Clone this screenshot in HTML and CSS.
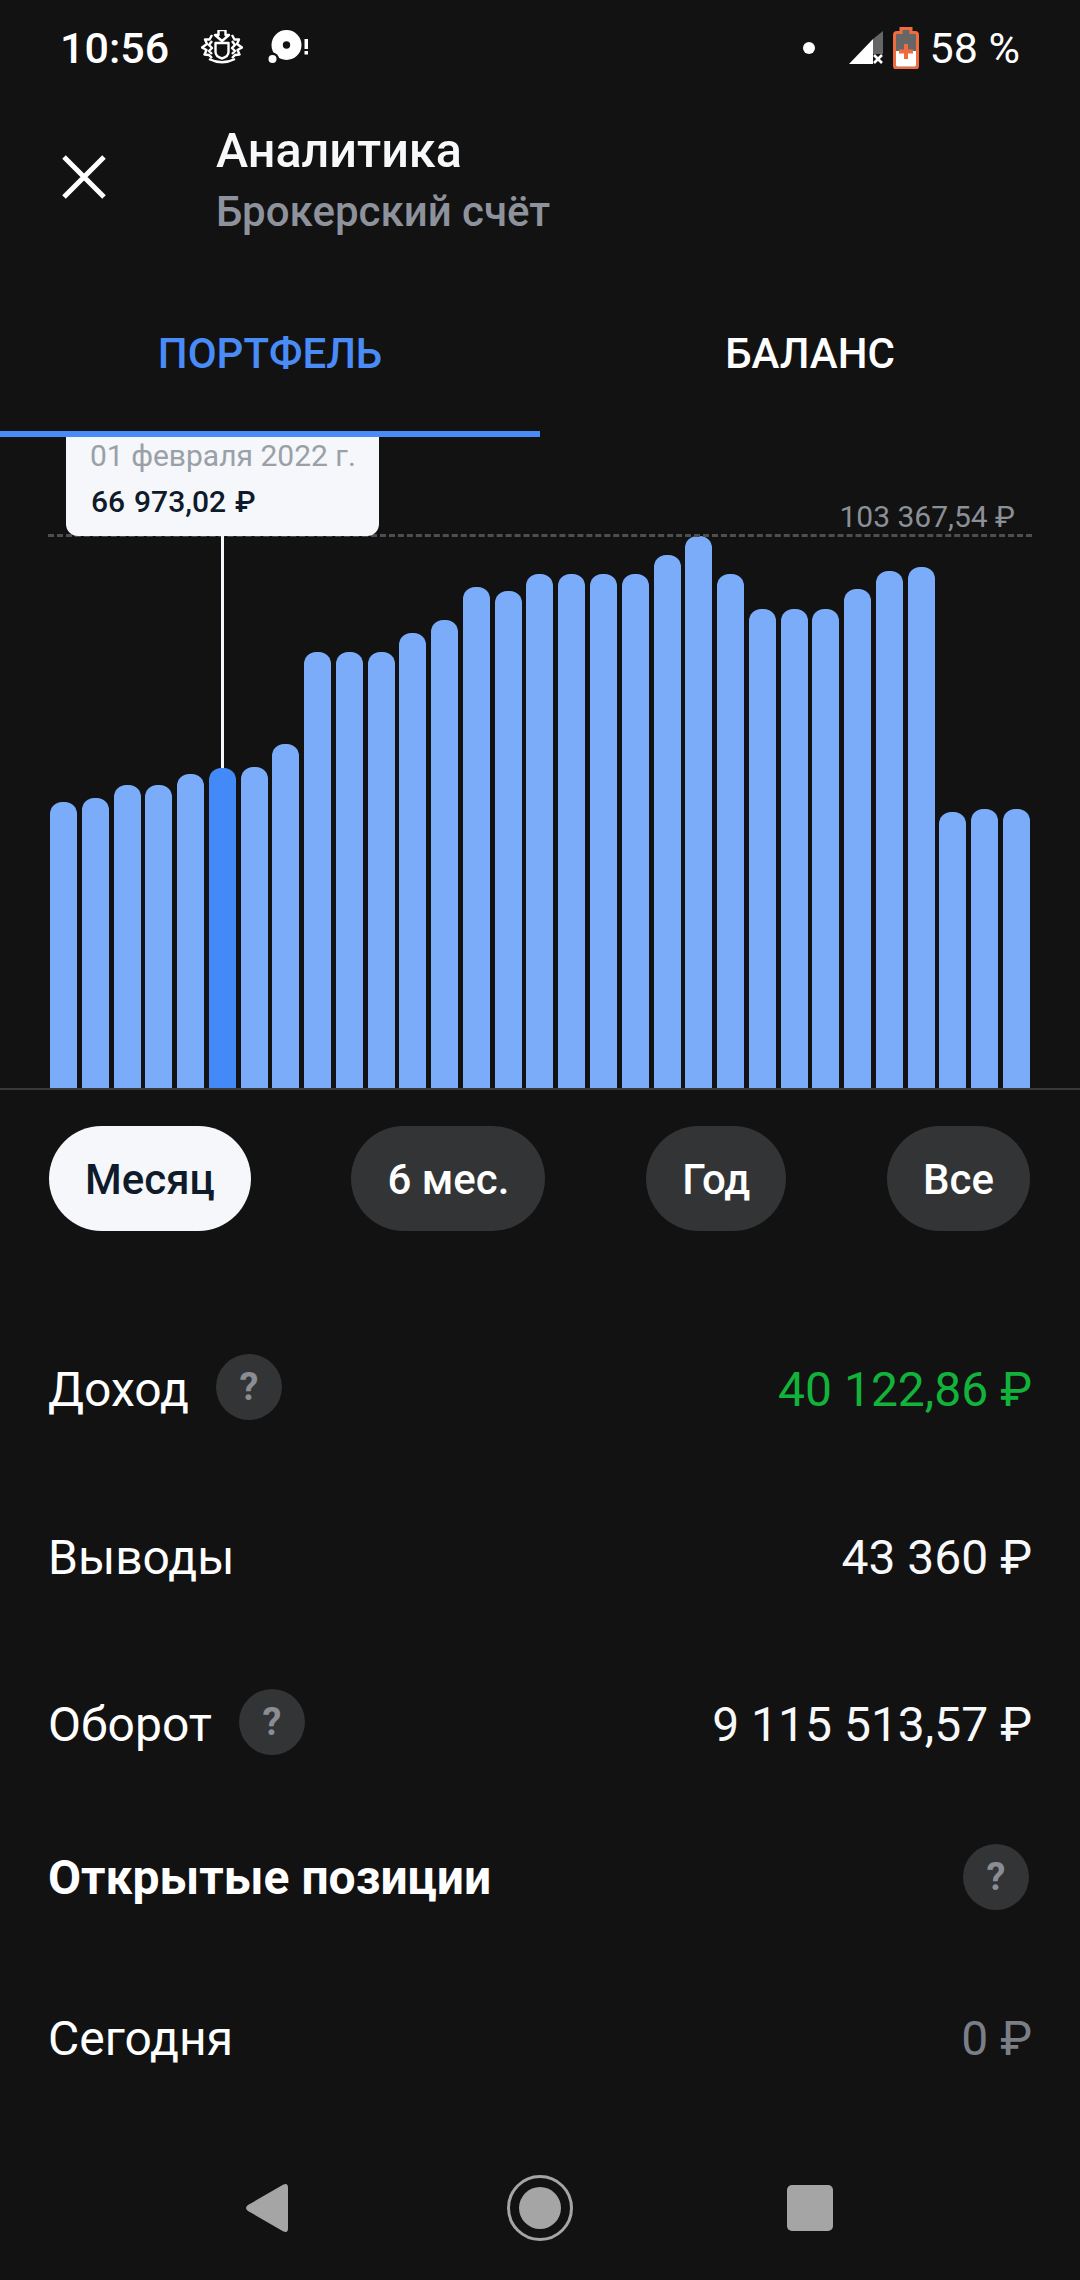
FILE: index.html
```html
<!DOCTYPE html>
<html lang="ru">
<head>
    <meta charset="UTF-8">
    <meta name="viewport" content="width=device-width, initial-scale=1.0">
    <title>Аналитика</title>
    <link rel="stylesheet" href="styles.css">
</head>
<body>
    <!-- Status bar -->
    <div class="status-bar">
        <div class="status-left">
            <span class="time">10:56</span>
            <svg class="crest" width="42" height="36" viewBox="0 2 42 36" fill="none" stroke="#fff" stroke-width="2.4" stroke-linejoin="round">
                <path d="M17.500 2h7v5h3.500L21 13l-7-6h3.500z"/>
                <path d="M14.500 15h13v9q0 4.500-6.500 6.500-6.500-2-6.500-6.500z"/>
                <path d="M11 7L8.500 11.500 4 11.500l2 4.500-5 3.500 4.500 2.500-2 4.500 4.500 .5L11 30M11 13l-3 4 3 3-3 3 3 3"/>
                <path d="M31 7l2.500 4.500h4.500l-2 4.500 5 3.500-4.500 2.500 2 4.500-4.500 .5L31 30M31 13l3 4-3 3 3 3-3 3"/>
                <path d="M8 31q13 6.500 26 0"/>
            </svg>
            <svg class="disc" width="42" height="36" viewBox="0 2 42 36">
                <circle cx="18.500" cy="17" r="15" fill="#fff"/>
                <circle cx="18.500" cy="17" r="3.700" fill="#121212"/>
                <circle cx="4.500" cy="31" r="6.500" fill="#121212"/>
                <circle cx="4.500" cy="31" r="4" fill="#fff"/>
                <path d="M36.500 11h3.500v10h-3.500zM36.500 23h3.500v3.500h-3.500z" fill="#fff"/>
            </svg>
        </div>
        <div class="status-right">
            <span class="status-dot"></span>
            <svg class="signal" width="34" height="34" viewBox="0 0 34 34">
                <path d="M24 8L34 0v23H24z" fill="#666"/>
                <path d="M0 33L24 8v25z" fill="#fff"/>
                <path d="M25 24l8 8M33 24l-8 8" stroke="#fff" stroke-width="2.6"/>
            </svg>
            <svg class="battery" width="26" height="42" viewBox="0 0 26 42">
                <path d="M8 1.500h10v4h4q2.500 0 2.500 2.500v31q0 2-2 2H3.500q-2 0-2-2V8q0-2.500 2.500-2.500h4z" fill="#666" stroke="#ee6c3f" stroke-width="3"/>
                <path d="M3 24h20v14q0 1.500-1.500 1.500h-17Q3 39.500 3 38z" fill="#fff"/>
                <path d="M13 17v15M6 24.500h14" stroke="#ee6c3f" stroke-width="4"/>
            </svg>
            <span class="battery-text">58 %</span>
        </div>
    </div>

    <!-- Header -->
    <div class="header">
        <svg class="close-icon" width="44" height="44" viewBox="0 0 44 44" stroke="#fff" stroke-width="5">
            <path d="M2 2l40 40M42 2L2 42"/>
        </svg>
        <div class="header-titles">
            <div class="title">Аналитика</div>
            <div class="subtitle">Брокерский счёт</div>
        </div>
    </div>

    <!-- Tabs -->
    <div class="tabs">
        <div class="tab tab-active">ПОРТФЕЛЬ</div>
        <div class="tab">БАЛАНС</div>
    </div>

    <!-- Chart -->
    <div class="chart">
        <div class="max-label">103 367,54 ₽</div>
        <div class="max-line"></div>
        <div class="tooltip">
            <div class="tooltip-date">01 февраля 2022 г.</div>
            <div class="tooltip-value">66 973,02 ₽</div>
        </div>
        <div class="tooltip-stem"></div>
        <div class="bars">
            <div class="bar" style="height:286px"></div>
            <div class="bar" style="height:290px"></div>
            <div class="bar" style="height:303px"></div>
            <div class="bar" style="height:303px"></div>
            <div class="bar" style="height:314px"></div>
            <div class="bar bar-selected" style="height:320px"></div>
            <div class="bar" style="height:321px"></div>
            <div class="bar" style="height:344px"></div>
            <div class="bar" style="height:436px"></div>
            <div class="bar" style="height:436px"></div>
            <div class="bar" style="height:436px"></div>
            <div class="bar" style="height:455px"></div>
            <div class="bar" style="height:468px"></div>
            <div class="bar" style="height:501px"></div>
            <div class="bar" style="height:497px"></div>
            <div class="bar" style="height:514px"></div>
            <div class="bar" style="height:514px"></div>
            <div class="bar" style="height:514px"></div>
            <div class="bar" style="height:514px"></div>
            <div class="bar" style="height:533px"></div>
            <div class="bar" style="height:552px"></div>
            <div class="bar" style="height:514px"></div>
            <div class="bar" style="height:479px"></div>
            <div class="bar" style="height:479px"></div>
            <div class="bar" style="height:479px"></div>
            <div class="bar" style="height:499px"></div>
            <div class="bar" style="height:517px"></div>
            <div class="bar" style="height:521px"></div>
            <div class="bar" style="height:276px"></div>
            <div class="bar" style="height:279px"></div>
            <div class="bar" style="height:279px"></div>
        </div>
    </div>

    <!-- Period buttons -->
    <div class="periods">
        <div class="pill pill-active">Месяц</div>
        <div class="pill">6 мес.</div>
        <div class="pill">Год</div>
        <div class="pill">Все</div>
    </div>

    <!-- Stats -->
    <div class="stats">
        <div class="row">
            <div class="row-label">Доход <span class="help">?</span></div>
            <div class="row-value value-green">40 122,86 ₽</div>
        </div>
        <div class="row">
            <div class="row-label">Выводы</div>
            <div class="row-value">43 360 ₽</div>
        </div>
        <div class="row">
            <div class="row-label">Оборот <span class="help">?</span></div>
            <div class="row-value">9 115 513,57 ₽</div>
        </div>
        <div class="row row-heading">
            <div class="row-label">Открытые позиции</div>
            <span class="help help-end">?</span>
        </div>
        <div class="row row-last">
            <div class="row-label">Сегодня</div>
            <div class="row-value value-muted">0 ₽</div>
        </div>
    </div>

    <!-- Navigation bar -->
    <div class="nav-bar">
        <svg width="42" height="48" viewBox="0 0 42 48" fill="#a5a5a5">
            <path d="M37 .8q5-2.500 5 3v40.400q0 5.500-5 3L2 27q-4-3 0-6z"/>
        </svg>
        <svg class="nav-home" width="66" height="66" viewBox="0 0 66 66">
            <circle cx="33" cy="33" r="31.500" fill="none" stroke="#a5a5a5" stroke-width="3"/>
            <circle cx="33" cy="33" r="21" fill="#a5a5a5"/>
        </svg>
        <div class="nav-square"></div>
    </div>
</body>
</html>
```

FILE: styles.css
```css
body {
    margin: 0;
    width: 1080px;
    height: 2280px;
    overflow: hidden;
    background-color: #121212;
    color: #fff;
    font-family: Roboto, 'Noto Sans', sans-serif;
}

/* Status bar */
.status-bar {
    height: 96px;
    padding: 0 60px;
    display: flex;
    justify-content: space-between;
    align-items: center;
    font-size: 43px;
}

.status-left, .status-right {
    display: flex;
    align-items: center;
}

.time {
    font-weight: 500;
}

.crest {
    margin-left: 32px;
}

.disc {
    margin-left: 25px;
}

.status-dot {
    width: 12px;
    height: 12px;
    border-radius: 50%;
    background-color: #fff;
}

.signal {
    margin-left: 34px;
}

.battery {
    margin-left: 10px;
}

.battery-text {
    margin-left: 11px;
}

/* Header */
.header {
    height: 162px;
    display: flex;
    align-items: center;
}

.close-icon {
    margin-left: 62px;
}

.header-titles {
    margin-top: 10px;
    margin-left: 110px;
}

.title {
    font-size: 48.500px;
    font-weight: 500;
    line-height: 60px;
    color: #f7f8fa;
}

.subtitle {
    font-size: 42px;
    font-weight: 500;
    line-height: 62px;
    color: #8d929c;
}

/* Tabs */
.tabs {
    height: 179px;
    display: flex;
}

.tab {
    width: 540px;
    box-sizing: border-box;
    padding-top: 72px;
    line-height: 48px;
    text-align: center;
    font-size: 42px;
    font-weight: 500;
}

.tab-active {
    color: #4a8cf7;
    border-bottom: 6px solid #4a8cf7;
}

/* Chart */
.chart {
    position: relative;
    height: 651px;
    border-bottom: 2px solid #38393b;
    padding: 0 50px;
    display: flex;
    align-items: flex-end;
}

.bars {
    flex: 1;
    display: flex;
    align-items: flex-end;
    gap: 4.780px;
}

.bar {
    flex: 1;
    background-color: #7aacfa;
    border-radius: 12px 12px 0 0;
}

.bar-selected {
    background-color: #4489f8;
}

.max-label {
    position: absolute;
    top: 62px;
    right: 65px;
    font-size: 30px;
    line-height: 36px;
    color: #8b8f97;
}

.max-line {
    position: absolute;
    top: 97px;
    left: 48px;
    right: 48px;
    border-top: 3px dashed #4d4e50;
}

.tooltip {
    position: absolute;
    top: 0;
    left: 66px;
    width: 313px;
    height: 99px;
    box-sizing: border-box;
    padding: 0 0 0 24px;
    background-color: #f5f7fa;
    border-radius: 0 0 12px 12px;
    font-size: 30px;
    white-space: nowrap;
}

.tooltip-date {
    line-height: 38px;
    color: #9aa0a8;
}

.tooltip-value {
    margin-top: 8px;
    padding-left: 1px;
    line-height: 38px;
    font-weight: 500;
    word-spacing: 1.500px;
    color: #0f1a2a;
}

.tooltip-stem {
    position: absolute;
    top: 99px;
    left: 221px;
    width: 3px;
    height: 232px;
    background-color: #f5f7fa;
}

/* Period buttons */
.periods {
    margin-top: 36px;
    padding: 0 50px 0 49px;
    display: flex;
    justify-content: space-between;
}

.pill {
    height: 105px;
    padding: 2px 36px 0;
    box-sizing: border-box;
    border-radius: 53px;
    display: flex;
    align-items: center;
    background-color: #333435;
    font-size: 42px;
    font-weight: 500;
}

.pill-active {
    background-color: #f5f7fa;
    color: #0f1a2a;
}

/* Stats */
.stats {
    margin-top: 72px;
    padding: 0 48px;
}

.row {
    height: 167.500px;
    box-sizing: border-box;
    padding-top: 6px;
    display: flex;
    justify-content: space-between;
    align-items: center;
    font-size: 48px;
}

.row-label {
    display: flex;
    align-items: center;
}

.row-value {
    color: #f7f8fa;
}

.value-green {
    color: #12b33a;
}

.value-muted {
    color: #7a7f87;
}

.help {
    width: 66px;
    height: 66px;
    margin-top: -6px;
    margin-left: 27px;
    border-radius: 50%;
    display: flex;
    justify-content: center;
    align-items: center;
    background-color: #333435;
    color: #8a8d93;
    font-size: 38px;
    font-weight: 700;
}

.help-end {
    margin-top: 0;
    margin-right: 3px;
}

.row-heading {
    height: 143px;
    padding-top: 0;
    font-weight: 700;
}

.row-last {
    height: 176px;
    padding-top: 3px;
}

/* Navigation bar */
.nav-bar {
    position: absolute;
    top: 2175px;
    left: 246px;
    height: 66px;
    display: flex;
    align-items: center;
}

.nav-home {
    margin-left: 219px;
}

.nav-square {
    width: 46px;
    height: 46px;
    margin-left: 214px;
    border-radius: 5px;
    background-color: #a5a5a5;
}
```
